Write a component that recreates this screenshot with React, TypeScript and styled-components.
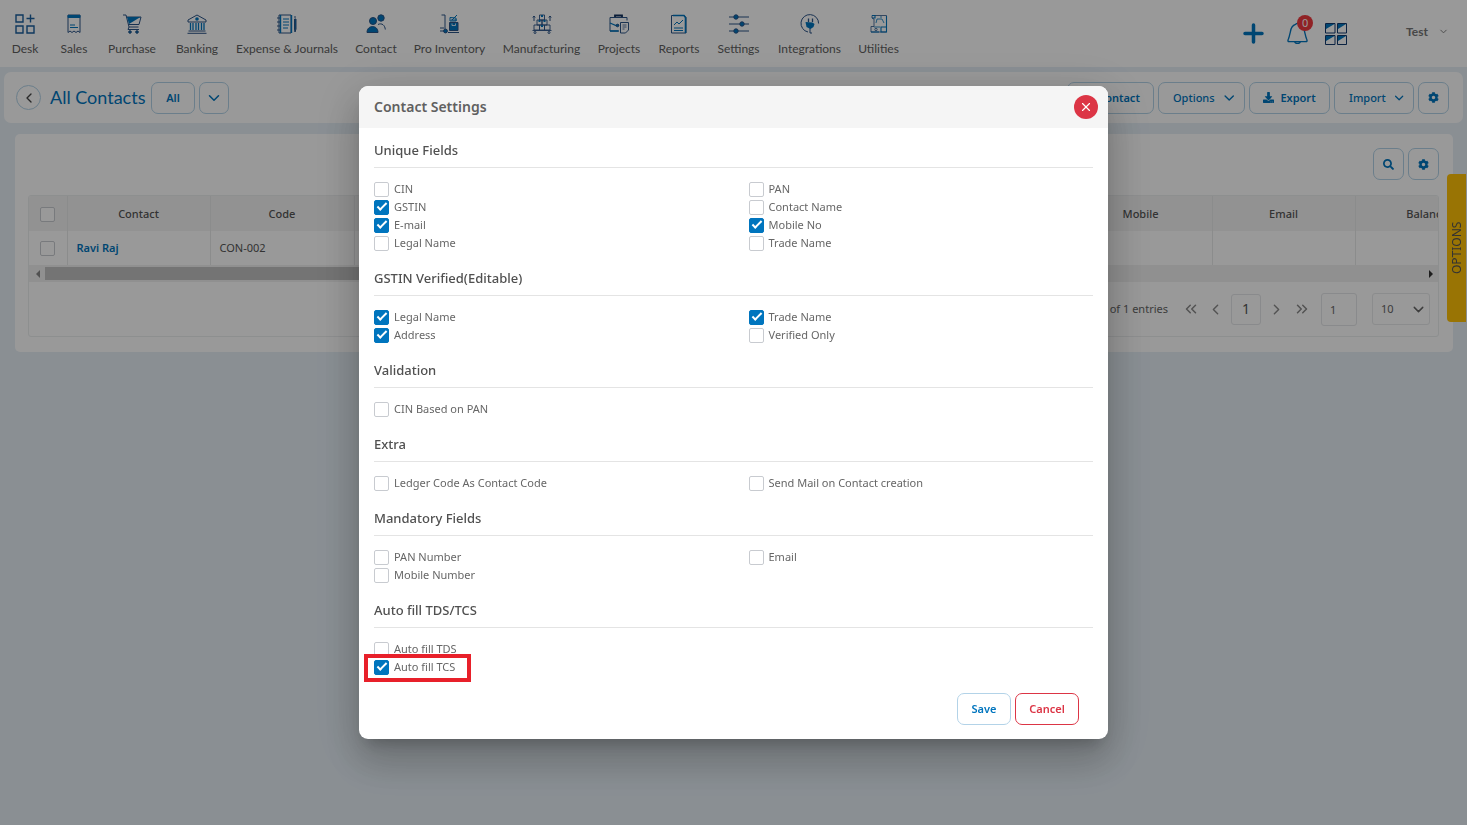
import React, { ReactNode } from "react";
import styled, { createGlobalStyle, css } from "styled-components";
import { FaPlus, FaCog, FaSearch, FaDownload } from "react-icons/fa";
import {
  ChevronDown,
  ChevronLeft,
  ChevronRight,
  ChevronsLeft,
  ChevronsRight,
  X,
} from "lucide-react";

const blue = "#0075be";
const navy = "#2b5488";
const ui = '"Noto Sans", "Open Sans", sans-serif';
const brand = 'Lato, "Open Sans", sans-serif';

const GlobalStyle = createGlobalStyle`
  *, *::before, *::after { box-sizing: border-box; }
  html { background: #e6eff6; }
  body { margin: 0; min-height: 100vh; overflow-x: hidden; font-family: ${ui}; font-size: 12px; color: #555; }
  button, input, select { font: inherit; color: inherit; margin: 0; }
  button { cursor: pointer; }
  a { text-decoration: none; color: inherit; }
`;

/* ---------- top navigation ---------- */

const TopBar = styled.header`
  display: flex;
  align-items: center;
  height: 67px;
  background: #fff;
`;
const Nav = styled.nav`
  display: flex;
  flex: 1;
  padding-top: 4px;
`;
const NavItem = styled.a<{ $w: number }>`
  display: flex;
  flex-direction: column;
  align-items: center;
  gap: 6px;
  width: ${(p) => p.$w}px;
  font: 12px/18px ${brand};
  color: #606060;
  white-space: nowrap;
  svg { display: block; }
`;
const Tools = styled.div`
  display: flex;
  align-items: center;
  padding-right: 18px;
  color: ${blue};
`;
const ToolButton = styled.button<{ $after: number }>`
  position: relative;
  display: flex;
  align-items: center;
  justify-content: center;
  width: 24px;
  height: 24px;
  margin-right: ${(p) => p.$after}px;
  padding: 0;
  border: 0;
  background: none;
  color: ${blue};
`;
const Badge = styled.span`
  position: absolute;
  top: -7px;
  right: -4px;
  width: 16px;
  height: 16px;
  border-radius: 50%;
  background: #f0393f;
  color: #fff;
  font: 11px/16px ${ui};
  text-align: center;
`;
const UserButton = styled.button`
  display: flex;
  align-items: center;
  gap: 10px;
  margin-left: 40px;
  padding: 0 0 4px;
  border: 0;
  background: none;
  font: bold 12px/16px ${brand};
  color: #777;
`;

/* ---------- page toolbar ---------- */

const Toolbar = styled.section`
  display: flex;
  align-items: center;
  gap: 4px;
  height: 51px;
  margin: 5px 4px 0;
  padding: 0 14px 0 12px;
  border-radius: 7px;
  background: #fff;
`;
const BackButton = styled.button`
  display: flex;
  align-items: center;
  justify-content: center;
  width: 25px;
  height: 25px;
  padding: 0;
  border: 1px solid #b3d3e8;
  border-radius: 50%;
  background: none;
  color: #444;
`;
const Title = styled.h1`
  width: 97px;
  margin: 0 0 0 5px;
  padding-bottom: 2px;
  font: 18px/24px ${brand};
  color: ${blue};
  white-space: nowrap;
`;
const Spacer = styled.div`
  flex: 1;
`;
const Button = styled.button<{ $w: number; $menu?: boolean; $danger?: boolean }>`
  display: flex;
  align-items: center;
  justify-content: ${(p) => (p.$menu ? "space-between" : "center")};
  gap: 6px;
  width: ${(p) => p.$w}px;
  height: 32px;
  padding: ${(p) => (p.$menu ? "0 7px 0 14px" : "0")};
  border: 1px solid ${(p) => (p.$danger ? "#dc3545" : "#b3d3e8")};
  border-radius: 7px;
  background: #fff;
  font: ${(p) => (p.$menu ? 500 : 600)} 11px/16px ${ui};
  color: ${(p) => (p.$danger ? "#dc3545" : blue)};
  white-space: nowrap;
`;

/* ---------- contact list ---------- */

const Panel = styled.main`
  margin: 11px 14px 0 15px;
  padding: 14px 14px 15px 13px;
  border-radius: 5px;
  background: #fff;
`;
const PanelTools = styled.div`
  display: flex;
  justify-content: flex-end;
  gap: 4px;
  height: 47px;
`;
const Grid = styled.div`
  overflow: hidden;
  border: 1px solid #eceeef;
  border-radius: 3px;
`;
const TableClip = styled.div`
  overflow: hidden;
`;
const Table = styled.table`
  width: 1470px;
  table-layout: fixed;
  border-collapse: collapse;
  font: 11px/16px ${ui};
  color: #555;
  th, td { padding: 0 9px; border-right: 1px solid #e8e9ea; text-align: left; }
  th { height: 35px; background: #f4f4f4; font-weight: 500; text-align: center; }
  td { height: 34px; }
  th:first-child, td:first-child { padding: 0; text-align: center; }
  a { color: ${blue}; font-weight: 600; }
`;
const Scroll = styled.div`
  display: flex;
  align-items: center;
  gap: 5px;
  height: 17px;
  padding: 0 5px;
  background: #f1f1f1;
`;
const Thumb = styled.div`
  flex: 0 0 66%;
  height: 13px;
  background: #c1c1c1;
`;
const Arrow = styled.span<{ $right?: boolean }>`
  width: 0;
  height: 0;
  border: 4px solid transparent;
  ${(p) =>
    p.$right
      ? css`margin-left: auto; border-left-color: #333; border-right-width: 0;`
      : css`margin-left: 2px; border-right-color: #888; border-left-width: 0;`}
`;
const Pager = styled.div`
  display: flex;
  align-items: center;
  justify-content: flex-end;
  height: 54px;
  padding-right: 8px;
  color: #666;
`;
const Entries = styled.span`
  margin-right: 10px;
  font: 11px/16px ${ui};
`;
const PageButton = styled.button<{ $current?: boolean }>`
  display: flex;
  align-items: center;
  justify-content: center;
  width: ${(p) => (p.$current ? 30 : 25)}px;
  height: 31px;
  padding: 0;
  border: ${(p) => (p.$current ? "1px solid #e4e6e9" : "0")};
  border-radius: 3px;
  margin: ${(p) => (p.$current ? "0 3px" : "0")};
  background: none;
  font: 14px/20px ${ui};
  color: ${(p) => (p.$current ? "#555" : "#8a8a8a")};
`;
const PageInput = styled.input`
  width: 36px;
  height: 33px;
  margin: 0 15px 0 7px;
  padding: 0 8px;
  border: 1px solid #e4e6e9;
  border-radius: 3px;
  background: #fff;
  font: 11px/16px ${ui};
`;
const SelectWrap = styled.span`
  position: relative;
  display: flex;
  svg { position: absolute; right: 3px; top: 8px; pointer-events: none; }
`;
const PageSelect = styled.select`
  appearance: none;
  width: 58px;
  height: 32px;
  padding: 0 8px;
  border: 1px solid #e8eaec;
  border-radius: 3px;
  background: #fff;
  font: 11px/16px ${ui};
`;
const OptionsTab = styled.button`
  position: fixed;
  top: 174px;
  right: 1px;
  width: 19px;
  height: 148px;
  padding: 0;
  border: 0;
  border-radius: 0 4px 4px 0;
  background: #ffc107;
  font: 12px/19px ${ui};
  color: #555;
  writing-mode: vertical-rl;
  transform: rotate(180deg);
`;

/* ---------- dialog ---------- */

const Overlay = styled.div`
  position: fixed;
  inset: 0;
  display: flex;
  align-items: center;
  justify-content: center;
  background: rgba(0, 0, 0, 0.4);
`;
const Dialog = styled.section`
  width: 749px;
  max-width: calc(100% - 32px);
  overflow: hidden;
  border-radius: 9px;
  background: #fff;
  box-shadow: 0 11px 15px -7px rgba(0, 0, 0, 0.2), 0 24px 38px 3px rgba(0, 0, 0, 0.14),
    0 9px 46px 8px rgba(0, 0, 0, 0.12);
`;
const DialogHead = styled.header`
  display: flex;
  align-items: center;
  justify-content: space-between;
  height: 42px;
  padding: 0 10px 0 15px;
  background: #f5f5f5;
  h2 { margin: 0; font: 600 14px/20px ${ui}; color: #606060; }
`;
const Close = styled.button`
  display: flex;
  align-items: center;
  justify-content: center;
  width: 24px;
  height: 24px;
  padding: 0;
  border: 0;
  border-radius: 50%;
  background: #dc3545;
  color: #fff;
`;
const DialogBody = styled.div`
  padding-top: 12px;
`;
const Group = styled.fieldset`
  min-width: 0;
  margin: 0 0 16px;
  padding: 0;
  border: 0;
`;
const GroupTitle = styled.h3`
  height: 28px;
  margin: 0 15px 12px;
  border-bottom: 1px solid #e4e4e4;
  font: 500 13px/20px ${ui};
  color: #505050;
`;
const Fields = styled.div`
  display: grid;
  grid-template-columns: 1fr 1fr;
`;
const Cell = styled.div`
  height: 18px;
  padding-left: 15px;
`;
const Label = styled.label<{ $marked?: boolean }>`
  position: relative;
  display: inline-flex;
  align-items: center;
  gap: 5px;
  height: 18px;
  font: 11px/18px ${ui};
  color: #666;
  white-space: nowrap;
  ${(p) =>
    p.$marked &&
    css`
      &::after {
        content: "";
        position: absolute;
        inset: -4px -16px -6px -10px;
        border: 4px solid #e8202a;
      }
    `}
`;
const Check = styled.input`
  appearance: none;
  position: relative;
  display: inline-block;
  width: 15px;
  height: 15px;
  border: 1px solid #c8cbd0;
  border-radius: 2px;
  background: #fff;
  vertical-align: middle;
  &:checked { border-color: ${blue}; background: ${blue}; }
  &:checked::after {
    content: "";
    position: absolute;
    left: 2px;
    top: 2px;
    width: 10px;
    height: 5px;
    border: solid #fff;
    border-width: 0 0 2px 2px;
    transform: rotate(-45deg);
  }
`;
const DialogFoot = styled.footer`
  display: flex;
  justify-content: flex-end;
  gap: 4px;
  padding: 1px 29px 14px;
`;

/* ---------- navigation icons ---------- */

const Svg = ({ children, size = 20 }: { children: ReactNode; size?: number }) => (
  <svg width={size} height={size} viewBox="0 0 20 20" fill="none" stroke={navy} strokeWidth="1" aria-hidden="true">
    {children}
  </svg>
);

const DeskIcon = () => (
  <Svg>
    <g stroke="#1b5f9e" strokeWidth="1.400">
      <path d="M1 1h7v7H1zM1 12h7v7H1zM12 12h7v7h-7zM15.500.5v8M11.500 4.500h8" />
    </g>
  </Svg>
);
const SalesIcon = () => (
  <Svg>
    <path d="M4 1h12v17.500l-2-1.500-2 1.500-2-1.500-2 1.500L6 17l-2 1.500z" />
    <path d="M4 1.500h12v2H4z" fill={blue} stroke={blue} />
    <path d="M6 11h5M6 13.500h8" stroke={blue} />
  </Svg>
);
const PurchaseIcon = () => (
  <Svg>
    <path d="M1 1h3l3 12h9.500M4.500 3H19l-2 7.500H6.500M7 13l-1 2.500h11" />
    <path d="M5 3h13.500L7 10z" fill={blue} stroke="none" />
    <circle cx="8" cy="18" r="1.300" fill={blue} />
    <circle cx="15" cy="18" r="1.300" fill={blue} />
  </Svg>
);
const BankIcon = () => (
  <Svg>
    <path d="M1 8V6l9-5 9 5v2zM1.500 17h17M.5 19.300h19" />
    <circle cx="10" cy="5" r="1.800" fill={blue} stroke="none" />
    <path d="M3.500 9v7M6 9v7M9 9v7M11.500 9v7M14.500 9v7M17 9v7" stroke={blue} strokeWidth="1.300" />
  </Svg>
);
const JournalIcon = () => (
  <Svg>
    <path d="M2 1h12v18H2z" />
    <path d="M3.500 1v18M14.500 1v18" stroke={blue} strokeWidth="1.400" />
    <path d="M6 5h6M6 8h6M6 11h6M6 14h5" stroke={blue} strokeWidth="1" />
    <path d="M0 4h3M0 8h3M0 12h3M0 16h3" />
    <path d="M17.500 5h1.500v10l-1 3-.5-3zM17 3h2" fill={blue} />
  </Svg>
);
const ContactIcon = () => (
  <Svg>
    <g fill={blue}>
      <circle cx="7" cy="7" r="3.500" />
      <circle cx="15" cy="4" r="3.200" />
      <path d="M1 18.500c0-8 11-8 11 0z" />
    </g>
    <path d="M12 10.500c4-2 7 1 7.300 5" />
  </Svg>
);
const InventoryIcon = () => (
  <Svg>
    <path d="M1.500 1h3.500v14M0 14h4M0 17h4M8 18.500h11" />
    <circle cx="5.500" cy="17" r="1.900" fill={blue} />
    <path d="M9.500 8.500h8.500v8h-8.500z" fill={blue} />
    <path d="M10 3.500l6 .5v3h-6zM12 6l5-5M11 6h6" stroke={blue} />
    <path d="M12 9.500v2h3.500v-2" stroke="#fff" strokeWidth=".8" />
  </Svg>
);
const ManufacturingIcon = () => (
  <Svg>
    <path d="M7.500 1h5v5h-5zM5 6h5v5H5zM10 6h5v5h-5zM2 11h5.500v5H2zM7.500 11h5v5h-5zM12.500 11H18v5h-5.500zM.5 16.500h19" strokeWidth=".9" />
    <path d="M9 1h2v2H9zM6.500 6h2v2h-2zM11.500 6h2v2h-2zM9 11h2v2H9z" fill={blue} stroke="none" />
    <path d="M2 7V2M18 7V2M.8 3.500L2 2l1.200 1.500M16.800 3.500L18 2l1.200 1.500" />
    <circle cx="3" cy="18.500" r="1" />
    <circle cx="17" cy="18.500" r="1" />
  </Svg>
);
const ProjectsIcon = () => (
  <Svg>
    <path d="M6 3V1.500h7V3" stroke="#102f5c" strokeWidth="1.800" />
    <path d="M18 6.500v-3H1V17h9" />
    <path d="M1 17h8.500M1 9l6 2.500 3-.5" stroke={blue} strokeWidth="1.300" />
    <circle cx="8.500" cy="11.500" r="1.300" fill={blue} />
    <path d="M11.500 8.500h8V16l-3 3h-5z" />
    <path d="M13.500 11h4M13.500 13h4M13.500 15h2" strokeWidth=".8" />
  </Svg>
);
const ReportsIcon = () => (
  <Svg>
    <path d="M2.500 1.500h12.500l2 2V19H2.500z" />
    <path d="M4 1.500h11l1.500 2V19" stroke={blue} strokeWidth="1.600" />
    <path d="M5 11l3-3 2 2 4-4M5 14h9M5 16.500h9" stroke={blue} />
  </Svg>
);
const SettingsIcon = () => (
  <Svg>
    <path d="M0 3h20M0 10h20M0 17h20" />
    <g fill={blue}>
      <circle cx="7" cy="3" r="2.200" />
      <circle cx="13" cy="10" r="2.200" />
      <circle cx="7" cy="17" r="2.200" />
    </g>
  </Svg>
);
const IntegrationsIcon = () => (
  <Svg>
    <path d="M8 18A8.800 8.800 0 1 1 18.600 9.500M10 19v-5M10 19h2" />
    <path d="M5.500 8l7 .5 2 1.500-1 3-3 2-4-2z" fill={blue} stroke="none" />
    <path d="M8.500 8V4.500M12.500 8V4.500" strokeWidth="1.300" />
  </Svg>
);
const UtilitiesIcon = () => (
  <Svg>
    <path d="M3 1.500h14.500V18H2v-5.500h3V5L3 4z" strokeWidth=".8" />
    <path d="M17.500 2v16H12v-5h5.500M3 1.500h3V4H3M2 18h8" stroke={blue} strokeWidth="1.100" />
    <path d="M7 9l1-4h5l2 4M5 13h6M12 2v2" stroke={blue} strokeWidth=".8" />
    <circle cx="7" cy="15.500" r="1.200" strokeWidth=".8" />
  </Svg>
);
const BellIcon = () => (
  <svg width="23" height="23" viewBox="0 0 24 24" fill="none" stroke={blue} strokeWidth="1.400" aria-hidden="true">
    <path d="M10 2.500c1-1.500 3-1.500 4 0 4 1.200 5 4 5.500 8l1.500 6c1.500 3.500 1.500 4-1 4H4c-2.500 0-2.500-.5-1-4l1.500-6c.5-4 1.500-6.800 5.500-8zM9 20.500c.5 2.500 5.500 2.500 6 0" />
  </svg>
);
const AppsIcon = () => (
  <svg width="22" height="22" viewBox="0 0 22 22" fill="none" stroke="#12396f" strokeWidth="1" aria-hidden="true">
    <path d="M.5.500h9.500v9.500H.5zM12.500.500h9v9.500h-9zM.5 12.500h9.500v9H.5zM12.500 12.500h9v9h-9z" />
    <path d="M1 1h8.500L1 6zM13 1h8l-8 5zM1 13h8.500L1 18zM13 13h8l-8 5z" fill={blue} stroke="none" />
  </svg>
);

const navItems: { label: string; w: number; icon: ReactNode }[] = [
  { label: "Desk", w: 50, icon: <DeskIcon /> },
  { label: "Sales", w: 48, icon: <SalesIcon /> },
  { label: "Purchase", w: 68, icon: <PurchaseIcon /> },
  { label: "Banking", w: 62, icon: <BankIcon /> },
  { label: "Expense & Journals", w: 118, icon: <JournalIcon /> },
  { label: "Contact", w: 60, icon: <ContactIcon /> },
  { label: "Pro Inventory", w: 87, icon: <InventoryIcon /> },
  { label: "Manufacturing", w: 97, icon: <ManufacturingIcon /> },
  { label: "Projects", w: 58, icon: <ProjectsIcon /> },
  { label: "Reports", w: 62, icon: <ReportsIcon /> },
  { label: "Settings", w: 57, icon: <SettingsIcon /> },
  { label: "Integrations", w: 85, icon: <IntegrationsIcon /> },
  { label: "Utilities", w: 53, icon: <UtilitiesIcon /> },
];

type Field = { label: string; on?: boolean; marked?: boolean } | null;

/* Fields run left to right, two to a row; null leaves a cell empty. */
const groups: { title: string; fields: Field[] }[] = [
  {
    title: "Unique Fields",
    fields: [
      { label: "CIN" },
      { label: "PAN" },
      { label: "GSTIN", on: true },
      { label: "Contact Name" },
      { label: "E-mail", on: true },
      { label: "Mobile No", on: true },
      { label: "Legal Name" },
      { label: "Trade Name" },
    ],
  },
  {
    title: "GSTIN Verified(Editable)",
    fields: [
      { label: "Legal Name", on: true },
      { label: "Trade Name", on: true },
      { label: "Address", on: true },
      { label: "Verified Only" },
    ],
  },
  { title: "Validation", fields: [{ label: "CIN Based on PAN" }] },
  {
    title: "Extra",
    fields: [{ label: "Ledger Code As Contact Code" }, { label: "Send Mail on Contact creation" }],
  },
  {
    title: "Mandatory Fields",
    fields: [{ label: "PAN Number" }, { label: "Email" }, { label: "Mobile Number" }],
  },
  {
    title: "Auto fill TDS/TCS",
    fields: [{ label: "Auto fill TDS" }, null, { label: "Auto fill TCS", on: true, marked: true }],
  },
];

const columns = [
  { name: "Contact", w: 143 },
  { name: "Code", w: 144 },
  { name: "", w: 143 },
  { name: "", w: 143 },
  { name: "", w: 143 },
  { name: "", w: 143 },
  { name: "", w: 143 },
  { name: "Mobile", w: 143 },
  { name: "Email", w: 143 },
  { name: "Balance", w: 144 },
];

export default function App() {
  return (
    <>
      <GlobalStyle />
      <TopBar>
        <Nav>
          {navItems.map((n) => (
            <NavItem key={n.label} href="#" $w={n.w}>
              {n.icon}
              {n.label}
            </NavItem>
          ))}
        </Nav>
        <Tools>
          <ToolButton $after={20} aria-label="Add">
            <svg width="21" height="21" viewBox="0 0 21 21" stroke={blue} strokeWidth="3.500" strokeLinecap="round" aria-hidden="true">
              <path d="M10.500 2v17M2 10.500h17" />
            </svg>
          </ToolButton>
          <ToolButton $after={15} aria-label="Notifications">
            <BellIcon />
            <Badge>0</Badge>
          </ToolButton>
          <ToolButton $after={18} aria-label="Apps">
            <AppsIcon />
          </ToolButton>
          <UserButton>
            Test <ChevronDown size={11} />
          </UserButton>
        </Tools>
      </TopBar>

      <Toolbar>
        <BackButton aria-label="Back">
          <ChevronLeft size={16} />
        </BackButton>
        <Title>All Contacts</Title>
        <Button $w={44}>All</Button>
        <Button $w={30} aria-label="More views">
          <ChevronDown size={18} />
        </Button>
        <Spacer />
        <Button $w={87}>
          <FaPlus size={11} /> Contact
        </Button>
        <Button $w={87} $menu>
          Options <ChevronDown size={18} />
        </Button>
        <Button $w={81}>
          <FaDownload size={11} /> Export
        </Button>
        <Button $w={80} $menu>
          Import <ChevronDown size={18} />
        </Button>
        <Button $w={31} aria-label="Toolbar settings">
          <FaCog size={11} />
        </Button>
      </Toolbar>

      <Panel>
        <PanelTools>
          <Button $w={31} aria-label="Search">
            <FaSearch size={11} />
          </Button>
          <Button $w={31} aria-label="Table settings">
            <FaCog size={11} />
          </Button>
        </PanelTools>
        <Grid>
          <TableClip>
            <Table>
              <colgroup>
                <col style={{ width: 38 }} />
                {columns.map((c, i) => (
                  <col key={i} style={{ width: c.w }} />
                ))}
              </colgroup>
              <thead>
                <tr>
                  <th>
                    <Check type="checkbox" aria-label="Select all" />
                  </th>
                  {columns.map((c, i) => (
                    <th key={i}>{c.name}</th>
                  ))}
                </tr>
              </thead>
              <tbody>
                <tr>
                  <td>
                    <Check type="checkbox" aria-label="Select Ravi Raj" />
                  </td>
                  <td>
                    <a href="#">Ravi Raj</a>
                  </td>
                  <td>CON-002</td>
                  {columns.slice(2).map((_, i) => (
                    <td key={i} />
                  ))}
                </tr>
              </tbody>
            </Table>
          </TableClip>
          <Scroll>
            <Arrow />
            <Thumb />
            <Arrow $right />
          </Scroll>
          <Pager>
            <Entries>of 1 entries</Entries>
            <PageButton aria-label="First page">
              <ChevronsLeft size={18} />
            </PageButton>
            <PageButton aria-label="Previous page">
              <ChevronLeft size={17} />
            </PageButton>
            <PageButton $current>1</PageButton>
            <PageButton aria-label="Next page">
              <ChevronRight size={17} />
            </PageButton>
            <PageButton aria-label="Last page">
              <ChevronsRight size={18} />
            </PageButton>
            <PageInput aria-label="Go to page" defaultValue="1" />
            <SelectWrap>
              <PageSelect aria-label="Rows per page" defaultValue="10">
                <option>10</option>
              </PageSelect>
              <ChevronDown size={17} />
            </SelectWrap>
          </Pager>
        </Grid>
      </Panel>
      <OptionsTab>OPTIONS</OptionsTab>

      <Overlay>
        <Dialog role="dialog" aria-modal="true" aria-labelledby="dialog-title">
          <DialogHead>
            <h2 id="dialog-title">Contact Settings</h2>
            <Close aria-label="Close">
              <X size={14} />
            </Close>
          </DialogHead>
          <DialogBody>
            {groups.map((g, gi) => (
              <Group key={g.title} aria-labelledby={`group-${gi}`}>
                <GroupTitle id={`group-${gi}`}>{g.title}</GroupTitle>
                <Fields>
                  {g.fields.map((f, fi) => (
                    <Cell key={fi}>
                      {f && (
                        <Label htmlFor={`field-${gi}-${fi}`} $marked={f.marked}>
                          <Check id={`field-${gi}-${fi}`} type="checkbox" defaultChecked={f.on} />
                          {f.label}
                        </Label>
                      )}
                    </Cell>
                  ))}
                </Fields>
              </Group>
            ))}
          </DialogBody>
          <DialogFoot>
            <Button $w={54}>Save</Button>
            <Button $w={64} $danger>
              Cancel
            </Button>
          </DialogFoot>
        </Dialog>
      </Overlay>
    </>
  );
}
